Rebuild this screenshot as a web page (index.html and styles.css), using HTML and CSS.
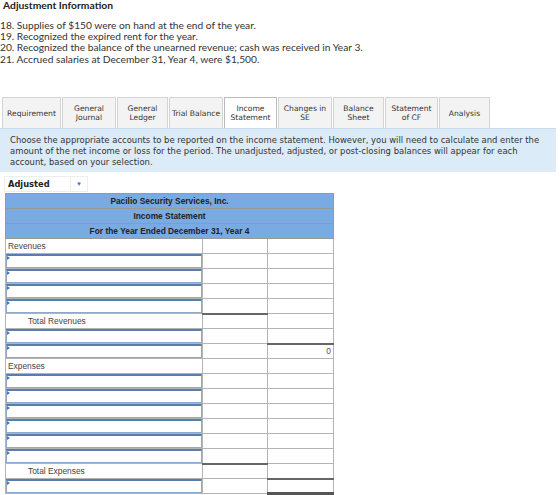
FILE: index.html
```html
<!DOCTYPE html>
<html lang="en">

<head>
    <meta charset="UTF-8">
    <title>Income Statement</title>
    <link rel="stylesheet" href="styles.css">
</head>

<body>
    <!-- Adjustment notes -->
    <div class="info">
        <h1>Adjustment Information</h1>
        <p>18. Supplies of $150 were on hand at the end of the year.</p>
        <p>19. Recognized the expired rent for the year.</p>
        <p>20. Recognized the balance of the unearned revenue; cash was received in Year 3.</p>
        <p>21. Accrued salaries at December 31, Year 4, were $1,500.</p>
    </div>

    <!-- Tabs -->
    <div class="tabs">
        <div class="tab t-req">Requirement</div>
        <div class="tab t-gj">General<br>Journal</div>
        <div class="tab t-gl">General<br>Ledger</div>
        <div class="tab t-tb">Trial Balance</div>
        <div class="tab t-is active">Income<br>Statement</div>
        <div class="tab t-se">Changes in<br>SE</div>
        <div class="tab t-bs">Balance<br>Sheet</div>
        <div class="tab t-cf">Statement<br>of CF</div>
        <div class="tab t-an">Analysis</div>
    </div>

    <div class="instructions">
        Choose the appropriate accounts to be reported on the income statement. However, you will need to calculate and enter the
        amount of the net income or loss for the period. The unadjusted, adjusted, or post-closing balances will appear for each
        account, based on your selection.
    </div>

    <div class="select">
        <span class="select-label">Adjusted</span>
        <span class="select-arrow">&#9660;</span>
    </div>

    <!-- Statement table -->
    <table class="statement" cellspacing="0" cellpadding="0">
        <colgroup>
            <col class="c-account">
            <col class="c-amount">
            <col class="c-total">
        </colgroup>
        <tr class="heading"><td colspan="3">Pacilio Security Services, Inc.</td></tr>
        <tr class="heading"><td colspan="3">Income Statement</td></tr>
        <tr class="heading"><td colspan="3">For the Year Ended December 31, Year 4</td></tr>

        <tr><td class="label">Revenues</td><td></td><td></td></tr>
        <tr><td class="pick"><div></div></td><td></td><td></td></tr>
        <tr><td class="pick"><div></div></td><td></td><td></td></tr>
        <tr><td class="pick"><div></div></td><td></td><td></td></tr>
        <tr><td class="pick"><div></div></td><td></td><td></td></tr>
        <tr><td class="label total">Total Revenues</td><td class="rule"></td><td></td></tr>
        <tr><td class="pick"><div></div></td><td></td><td></td></tr>
        <tr><td class="pick"><div></div></td><td></td><td class="num rule">0</td></tr>

        <tr><td class="label">Expenses</td><td></td><td></td></tr>
        <tr><td class="pick"><div></div></td><td></td><td></td></tr>
        <tr><td class="pick"><div></div></td><td></td><td></td></tr>
        <tr><td class="pick"><div></div></td><td></td><td></td></tr>
        <tr><td class="pick"><div></div></td><td></td><td></td></tr>
        <tr><td class="pick"><div></div></td><td></td><td></td></tr>
        <tr><td class="pick"><div></div></td><td></td><td></td></tr>
        <tr><td class="label total">Total Expenses</td><td class="rule"></td><td></td></tr>
        <tr><td class="pick"><div></div></td><td></td><td class="rule double"></td></tr>
    </table>
</body>

</html>
```

FILE: styles.css
```css
/* Page */
body {
    margin: 0;
    font-family: 'Liberation Sans', Arial, sans-serif;
    color: #333;
    background: #fff;
}

/* Adjustment notes */
.info {
    font-family: Lato, 'Open Sans', sans-serif;
    color: #333;
    height: 97px;
}

.info h1 {
    margin: 0 0 9px 3px;
    font-size: 10.3px;
    line-height: 11px;
    font-weight: bold;
    color: #222;
}

.info p {
    margin: 0;
    font-size: 10.2px;
    line-height: 11.2px;
}

/* Tabs */
.tabs {
    display: flex;
    gap: 1px;
    padding-left: 2px;
    height: 31px;
    font-family: 'DejaVu Sans', Verdana, sans-serif;
    font-size: 7.6px;
    line-height: 9px;
}

.tab {
    display: flex;
    align-items: center;
    justify-content: center;
    text-align: center;
    background: #f3f3f3;
    border: 1px solid #d4d4d4;
    border-bottom: none;
    color: #333;
    box-sizing: border-box;
}

.tab.active {
    background: #fff;
    border-color: #bbb;
}

.t-req { width: 59px; }
.t-gj { width: 54px; }
.t-gl { width: 51px; }
.t-tb { width: 54px; }
.t-is { width: 53px; }
.t-se { width: 54px; }
.t-bs { width: 51px; }
.t-cf { width: 53px; }
.t-an { width: 51px; }

.instructions {
    width: 556px;
    box-sizing: border-box;
    background: #dcebf8;
    border-top: 1px solid #c8dcef;
    padding: 6px 8px 0 10px;
    font-family: 'DejaVu Sans', Verdana, sans-serif;
    font-size: 8.45px;
    line-height: 11px;
    color: #333;
    height: 44px;
}

/* Balance selector */
.select {
    display: flex;
    align-items: center;
    width: 84px;
    height: 16px;
    margin: 4px 0 0 4px;
    border: 1px solid #eee;
    box-sizing: border-box;
}

.select-label {
    flex: 1;
    padding-left: 3px;
    font-family: 'DejaVu Sans', Verdana, sans-serif;
    font-size: 8.3px;
    font-weight: bold;
    color: #222;
    border-right: 1px solid #eee;
    line-height: 14px;
}

.select-arrow {
    width: 16px;
    text-align: center;
    font-size: 6px;
    color: #3b78c6;
}

/* Statement table */
.statement {
    margin: 1px 0 0 5px;
    width: 328px;
    border-collapse: collapse;
    table-layout: fixed;
    font-size: 8.4px;
}

.statement col.c-account { width: 197px; }
.statement col.c-amount { width: 65px; }
.statement col.c-total { width: 66px; }

.statement tr {
    height: 15px;
}

.statement td {
    padding: 0;
    border: 1px solid #b4b4b4;
    line-height: 12px;
}

.statement tr.heading td {
    background: #7aaae2;
    border-color: #999;
    text-align: center;
    font-weight: bold;
    color: #222;
}

.statement td.label {
    padding-left: 2px;
    color: #444;
}

.statement td.label.total {
    padding-left: 22px;
}

.statement td.pick {
    position: relative;
}

.statement td.pick div {
    height: 14px;
    box-sizing: border-box;
    border: 1px solid #8fa9cc;
    border-top: 2px solid #5a7db0;
}

/* little dropdown marker on each account picker */
.statement td.pick div::before {
    content: "";
    position: absolute;
    left: 1px;
    top: 2px;
    border-left: 3px solid #3b78c6;
    border-top: 2px solid transparent;
    border-bottom: 2px solid transparent;
}

.statement td.num {
    text-align: right;
    padding-right: 2px;
    color: #555;
}

.statement td.rule {
    border-top: 2px solid #666;
}

.statement td.rule.double {
    border-bottom: 3px solid #555;
}
```
